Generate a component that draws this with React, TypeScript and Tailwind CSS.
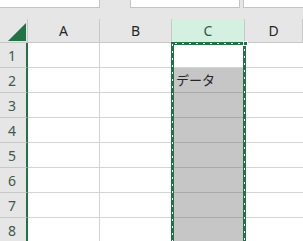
import React from 'react';

const cols = ['A', 'B', 'C', 'D'];
const rows = [1, 2, 3, 4, 5, 6, 7, 8];

export default function App() {
  return (
    <div
      className="relative h-[241px] w-[303px] overflow-hidden bg-[#e6e6e6] text-[#262626]"
      style={{ fontFamily: '"Noto Sans", "Noto Sans CJK JP", sans-serif' }}
    >
      {/* formula bar remnants */}
      <div className="flex h-[19px] items-start gap-[30px]">
        <div className="h-[8px] w-[107px] border-b border-r border-[#c4c4c4] bg-white" />
        <div className="flex gap-[3px]">
          <div className="h-[8px] w-[110px] border-x border-b border-[#c4c4c4] bg-white" />
          <div className="h-[8px] w-[60px] border-l border-b border-[#c4c4c4] bg-white" />
        </div>
      </div>

      <div className="grid grid-cols-[28px_72px_72px_73px_58px] grid-rows-[24px_repeat(8,25px)]">
        {/* corner */}
        <div className="relative border-b border-r border-[#c8c8c8]">
          <svg className="absolute left-[8px] top-[4px]" width="18" height="18" viewBox="0 0 18 18">
            <polygon points="18,0 18,18 0,18" fill="#217346" />
          </svg>
        </div>
        {cols.map((c) => (
          <div
            key={c}
            className={`flex items-center justify-center border-b border-r text-[14px] ${
              c === 'C'
                ? 'border-b-[#217346] border-r-[#c8c8c8] bg-[#d3f0e0] text-[#2b5d45]'
                : 'border-[#c8c8c8] text-[#262626]'
            }`}
          >
            {c}
          </div>
        ))}

        {rows.map((r) => (
          <React.Fragment key={r}>
            <div className="flex items-center justify-center border-b border-r-2 border-b-[#c8c8c8] border-r-[#217346] pr-[2px] text-[14px] text-[#40594c]">
              {r}
            </div>
            <div className="border-b border-r border-[#d4d4d4] bg-white" />
            <div className="border-b border-r border-[#d4d4d4] bg-white" />
            <div
              className={`border-b border-r text-[13px] ${
                r === 1 ? 'border-[#d4d4d4] bg-white' : 'border-[#a9a9a9] bg-[#c6c6c6]'
              }`}
            >
              {r === 2 && <span className="ml-[4px] leading-[24px]">データ</span>}
            </div>
            <div className="border-b border-[#d4d4d4] bg-white" />
          </React.Fragment>
        ))}
      </div>

      {/* copy selection marquee over column C */}
      <div className="absolute left-[171px] top-[42px] h-[210px] w-[75px] border-[3px] border-[#217346]">
        <div className="absolute bottom-[-3px] left-[-2px] top-[-1px] w-px bg-[repeating-linear-gradient(to_bottom,#fff_0_2px,transparent_2px_7px)]" />
        <div className="absolute bottom-[-3px] right-[-2px] top-[4px] w-px bg-[repeating-linear-gradient(to_bottom,#fff_0_2px,transparent_2px_7px)]" />
        <div className="absolute left-[1px] right-[1px] top-[-2px] h-px bg-[repeating-linear-gradient(to_right,#fff_0_2px,transparent_2px_7px)]" />
        <div className="absolute right-[-5px] top-[-4px] h-[5px] w-[5px] border border-white bg-[#217346]" />
      </div>
    </div>
  );
}
